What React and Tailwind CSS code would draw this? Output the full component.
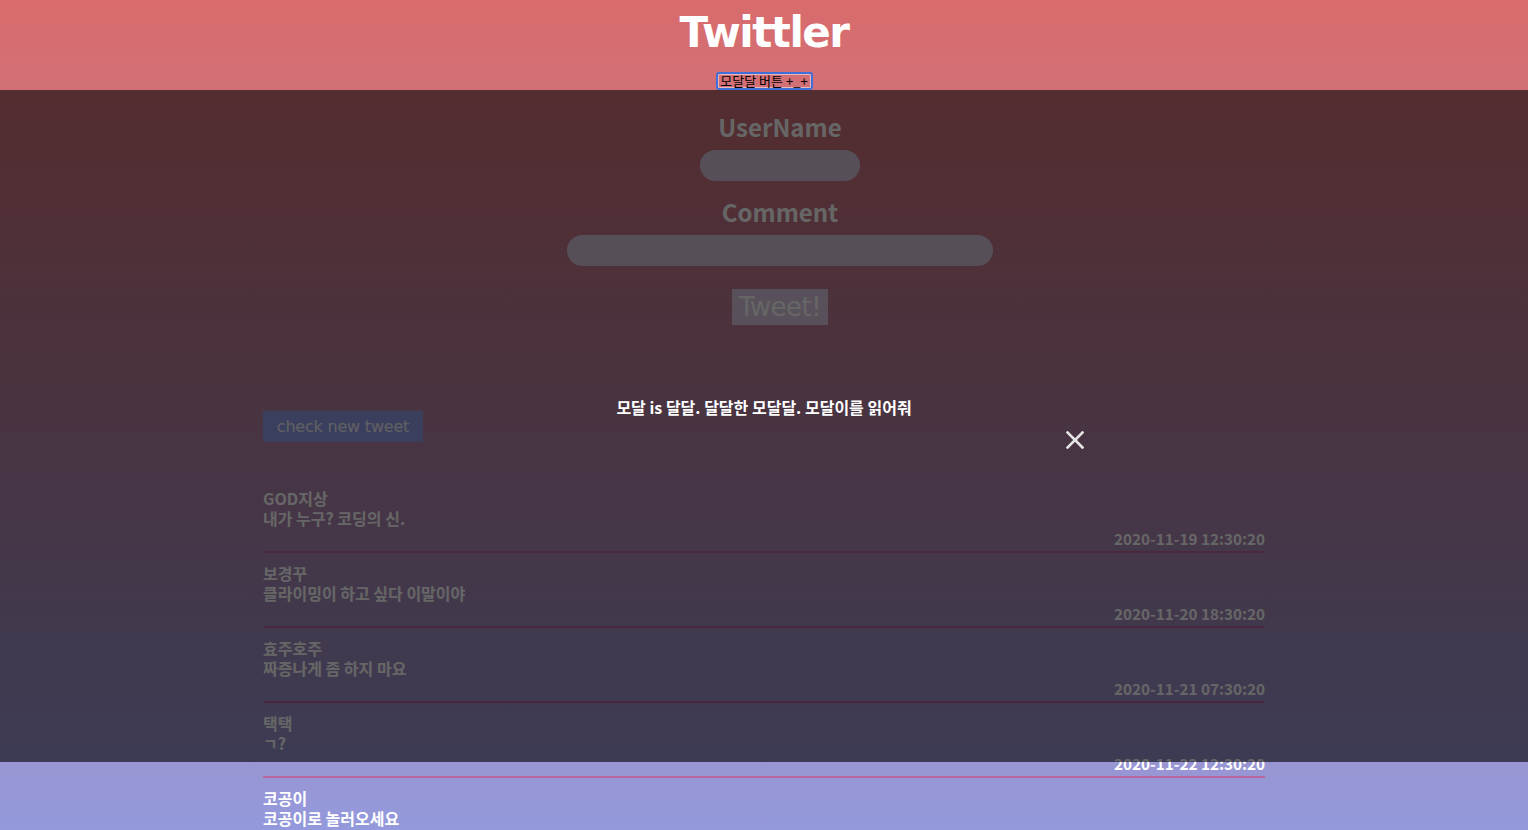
import React from "react";

const tweets = [
  { name: "GOD지상", text: "내가 누구? 코딩의 신.", date: "2020-11-19 12:30:20" },
  { name: "보경꾸", text: "클라이밍이 하고 싶다 이말이야", date: "2020-11-20 18:30:20" },
  { name: "효주호주", text: "짜증나게 좀 하지 마요", date: "2020-11-21 07:30:20" },
  { name: "택택", text: "ㄱ?", date: "2020-11-22 12:30:20" },
  { name: "코공이", text: "코공이로 놀러오세요", date: "2020-11-23 09:30:20" },
];

export default function App() {
  return (
    <div className="relative min-h-screen bg-fixed bg-[linear-gradient(to_bottom,#d96b6b,#9399dc)] font-['Noto_Sans_CJK_KR','Noto_Sans',sans-serif] text-white">
      <header className="flex h-[90px] flex-col items-center">
        <h1 className="pt-[8px] font-['DejaVu_Sans',sans-serif] text-[42px] font-bold leading-[50px] tracking-[-1.5px] text-white">
          Twittler
        </h1>
        <button className="relative z-10 mt-[14px] h-[20px] w-[97px] rounded-[3px] border-2 border-[#3f6fd9] bg-transparent px-[1px] text-[13px] leading-[14px] text-black shadow-[inset_0_0_0_1px_#ffffff80]">
          모달달 버튼 +_+
        </button>
      </header>

      <section className="flex flex-col items-center pl-[32px]">
        <label className="mt-[22px] text-[24px] font-bold leading-[30px]">UserName</label>
        <div className="mt-[8px] h-[31px] w-[160px] rounded-full bg-[#d6c6dc]" />
        <label className="mt-[16px] text-[24px] font-bold leading-[30px]">Comment</label>
        <div className="mt-[8px] h-[31px] w-[426px] rounded-full bg-[#d8c6dc]" />
        <button className="mt-[23px] h-[36px] w-[96px] bg-[#dbc8e0] font-['DejaVu_Sans',sans-serif] text-[26px] leading-[36px] tracking-[-0.5px] text-white">
          Tweet!
        </button>
      </section>

      <main className="mx-auto w-[1002px]">
        <button className="mt-[86px] h-[31px] w-[160px] bg-[#919deb] font-['DejaVu_Sans',sans-serif] text-[16px] leading-[31px] tracking-[-0.2px] text-[#f4f0f8]">
          check new tweet
        </button>
        <ul className="mt-[36px]">
          {tweets.map((t) => (
            <li key={t.name} className="border-b-2 border-[#b8679f] pb-[3px] pt-[10px] text-[16px] font-bold">
              <div className="leading-[20px]">{t.name}</div>
              <div className="leading-[20px]">{t.text}</div>
              <div className="text-right text-[15.3px] leading-[20px]">{t.date}</div>
            </li>
          ))}
        </ul>
      </main>

      <div className="absolute left-0 right-0 top-[90px] flex h-[672px] flex-col items-center bg-black/60 pt-[307px]">
        <div className="flex w-[640px] flex-col items-center">
          <p className="text-[16px] font-bold leading-[20px] text-white">
            모달 is 달달. 달달한 모달달. 모달이를 읽어줘
          </p>
          <div className="mt-[14px] flex w-full justify-end">
            <svg width="18" height="18" viewBox="0 0 18 18" className="text-[#e6e6e6]">
              <path d="M1.5 1.5 L16.5 16.5 M16.5 1.5 L1.5 16.5" stroke="currentColor" strokeWidth="2.6" strokeLinecap="square" />
            </svg>
          </div>
        </div>
      </div>
    </div>
  );
}
